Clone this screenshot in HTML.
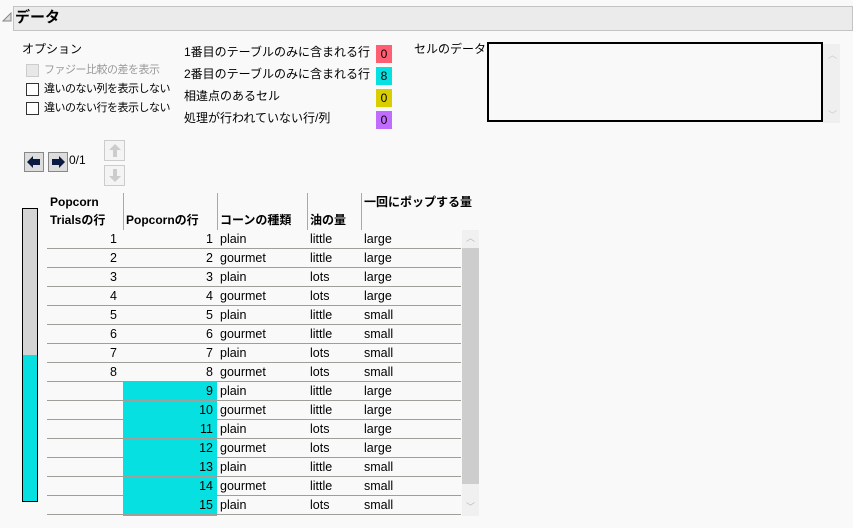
<!DOCTYPE html>
<html><head><meta charset="utf-8"><style>
*{margin:0;padding:0;box-sizing:border-box}
body{width:853px;height:528px;background:#f9f9f9;position:relative;overflow:hidden;font-family:"Liberation Sans","Noto Sans CJK JP",sans-serif;font-size:12px;color:#000}
.a{position:absolute;white-space:nowrap}
.cb{position:absolute;width:13px;height:13px;border:1px solid #333;background:#fff}
.opt{font-size:11px;letter-spacing:-0.5px}
.badge{position:absolute;left:376px;width:16px;height:18px;text-align:center;line-height:18px;font-size:12px}
.btn{position:absolute;border:1px solid #888;background:#ddd}
.row{position:absolute;left:47px;width:414px;height:19px;border-bottom:1px solid #a09e98}
.row span{position:absolute;top:2px;line-height:15px;font-size:12.5px}
.hd{position:absolute;font-weight:bold;line-height:18px}
.vs{position:absolute;top:193px;height:37px;width:1px;background:#a8a8a8}
</style></head><body>
<div class="a" style="left:13px;top:6px;width:840px;height:25px;background:#ebebeb;border:1px solid #c3c3c3"></div>
<svg class="a" style="left:2px;top:12px" width="11" height="10"><polygon points="9,1 9,9 1,9" fill="#ddd" stroke="#888" stroke-width="1"/></svg>
<div class="a" style="left:15px;top:7px;font-size:15px;font-weight:bold;line-height:22px">データ</div>

<div class="a" style="left:22px;top:41px;line-height:16px">オプション</div>
<div class="cb" style="left:26px;top:64px;background:#e8e8e8;border-color:#ccc"></div>
<div class="a opt" style="left:44px;top:62px;color:#999;line-height:16px">ファジー比較の差を表示</div>
<div class="cb" style="left:26px;top:83px"></div>
<div class="a opt" style="left:44px;top:81px;line-height:16px">違いのない列を表示しない</div>
<div class="cb" style="left:26px;top:102px"></div>
<div class="a opt" style="left:44px;top:100px;line-height:16px">違いのない行を表示しない</div>

<div class="a" style="left:184px;top:44px;line-height:16px">1番目のテーブルのみに含まれる行</div>
<div class="a" style="left:184px;top:66px;line-height:16px">2番目のテーブルのみに含まれる行</div>
<div class="a" style="left:184px;top:88px;line-height:16px">相違点のあるセル</div>
<div class="a" style="left:184px;top:110px;line-height:16px">処理が行われていない行/列</div>
<div class="badge" style="top:45px;background:#ff5f73">0</div>
<div class="badge" style="top:67px;background:#06e0e0">8</div>
<div class="badge" style="top:89px;background:#d9cf00">0</div>
<div class="badge" style="top:111px;background:#c06cff">0</div>

<div class="a" style="left:414px;top:41px;line-height:16px">セルのデータ</div>
<div class="a" style="left:487px;top:42px;width:336px;height:80px;border:2px solid #000;background:#f9f9f9"></div>
<div class="a" style="left:823px;top:44px;width:17px;height:79px;background:#efefef"></div>
<div class="a" style="left:828px;top:48px;color:#ccc;font-size:9px">︿</div>
<div class="a" style="left:828px;top:108px;color:#ccc;font-size:9px">﹀</div>

<div class="btn" style="left:24px;top:152px;width:20px;height:20px"></div>
<svg class="a" style="left:26px;top:155px" width="16" height="14"><polygon points="1,7 7,1 7,4 14,4 14,10 7,10 7,13" fill="#0a1a40"/></svg>
<div class="btn" style="left:48px;top:152px;width:20px;height:20px"></div>
<svg class="a" style="left:50px;top:155px" width="16" height="14"><polygon points="15,7 9,1 9,4 2,4 2,10 9,10 9,13" fill="#0a1a40"/></svg>
<div class="a" style="left:69px;top:152px;line-height:16px">0/1</div>
<div class="btn" style="left:104px;top:140px;width:21px;height:21px;border-color:#ccc;background:#f4f4f4"></div>
<svg class="a" style="left:108px;top:143px" width="14" height="15"><polygon points="7,1 13,7 9,7 9,14 5,14 5,7 1,7" fill="#ccc"/></svg>
<div class="btn" style="left:104px;top:165px;width:21px;height:21px;border-color:#ccc;background:#f4f4f4"></div>
<svg class="a" style="left:108px;top:168px" width="14" height="15"><polygon points="7,14 13,8 9,8 9,1 5,1 5,8 1,8" fill="#ccc"/></svg>

<div class="a" style="left:22px;top:208px;width:16px;height:294px;border:1px solid #000;background:#06e0e0"><div style="height:146px;background:#d4d4d4"></div></div>

<div class="hd" style="left:50px;top:193px">Popcorn<br>Trialsの行</div>
<div class="hd" style="left:126px;top:211px">Popcornの行</div>
<div class="hd" style="left:220px;top:211px">コーンの種類</div>
<div class="hd" style="left:310px;top:211px">油の量</div>
<div class="hd" style="left:364px;top:193px">一回にポップする量</div>
<div class="vs" style="left:123px"></div>
<div class="vs" style="left:217px"></div>
<div class="vs" style="left:307px"></div>
<div class="vs" style="left:361px"></div>

<div class="a" style="left:123px;top:382px;width:94px;height:134px;background:#06e0e0"></div>

<div class="row" style="top:230px"><span style="right:344px">1</span><span style="right:248px">1</span><span style="left:173px">plain</span><span style="left:263px">little</span><span style="left:317px">large</span></div>
<div class="row" style="top:249px"><span style="right:344px">2</span><span style="right:248px">2</span><span style="left:173px">gourmet</span><span style="left:263px">little</span><span style="left:317px">large</span></div>
<div class="row" style="top:268px"><span style="right:344px">3</span><span style="right:248px">3</span><span style="left:173px">plain</span><span style="left:263px">lots</span><span style="left:317px">large</span></div>
<div class="row" style="top:287px"><span style="right:344px">4</span><span style="right:248px">4</span><span style="left:173px">gourmet</span><span style="left:263px">lots</span><span style="left:317px">large</span></div>
<div class="row" style="top:306px"><span style="right:344px">5</span><span style="right:248px">5</span><span style="left:173px">plain</span><span style="left:263px">little</span><span style="left:317px">small</span></div>
<div class="row" style="top:325px"><span style="right:344px">6</span><span style="right:248px">6</span><span style="left:173px">gourmet</span><span style="left:263px">little</span><span style="left:317px">small</span></div>
<div class="row" style="top:344px"><span style="right:344px">7</span><span style="right:248px">7</span><span style="left:173px">plain</span><span style="left:263px">lots</span><span style="left:317px">small</span></div>
<div class="row" style="top:363px"><span style="right:344px">8</span><span style="right:248px">8</span><span style="left:173px">gourmet</span><span style="left:263px">lots</span><span style="left:317px">small</span></div>
<div class="row" style="top:382px"><span style="right:248px">9</span><span style="left:173px">plain</span><span style="left:263px">little</span><span style="left:317px">large</span></div>
<div class="row" style="top:401px"><span style="right:248px">10</span><span style="left:173px">gourmet</span><span style="left:263px">little</span><span style="left:317px">large</span></div>
<div class="row" style="top:420px"><span style="right:248px">11</span><span style="left:173px">plain</span><span style="left:263px">lots</span><span style="left:317px">large</span></div>
<div class="row" style="top:439px"><span style="right:248px">12</span><span style="left:173px">gourmet</span><span style="left:263px">lots</span><span style="left:317px">large</span></div>
<div class="row" style="top:458px"><span style="right:248px">13</span><span style="left:173px">plain</span><span style="left:263px">little</span><span style="left:317px">small</span></div>
<div class="row" style="top:477px"><span style="right:248px">14</span><span style="left:173px">gourmet</span><span style="left:263px">little</span><span style="left:317px">small</span></div>
<div class="row" style="top:496px"><span style="right:248px">15</span><span style="left:173px">plain</span><span style="left:263px">lots</span><span style="left:317px">small</span></div>

<div class="a" style="left:462px;top:230px;width:17px;height:286px;background:#f0f0f0"></div>
<div class="a" style="left:462px;top:248px;width:17px;height:236px;background:#cdcdcd"></div>
<div class="a" style="left:466px;top:231px;color:#bbb;font-size:9px">︿</div>
<div class="a" style="left:466px;top:500px;color:#bbb;font-size:9px">﹀</div>
</body></html>
